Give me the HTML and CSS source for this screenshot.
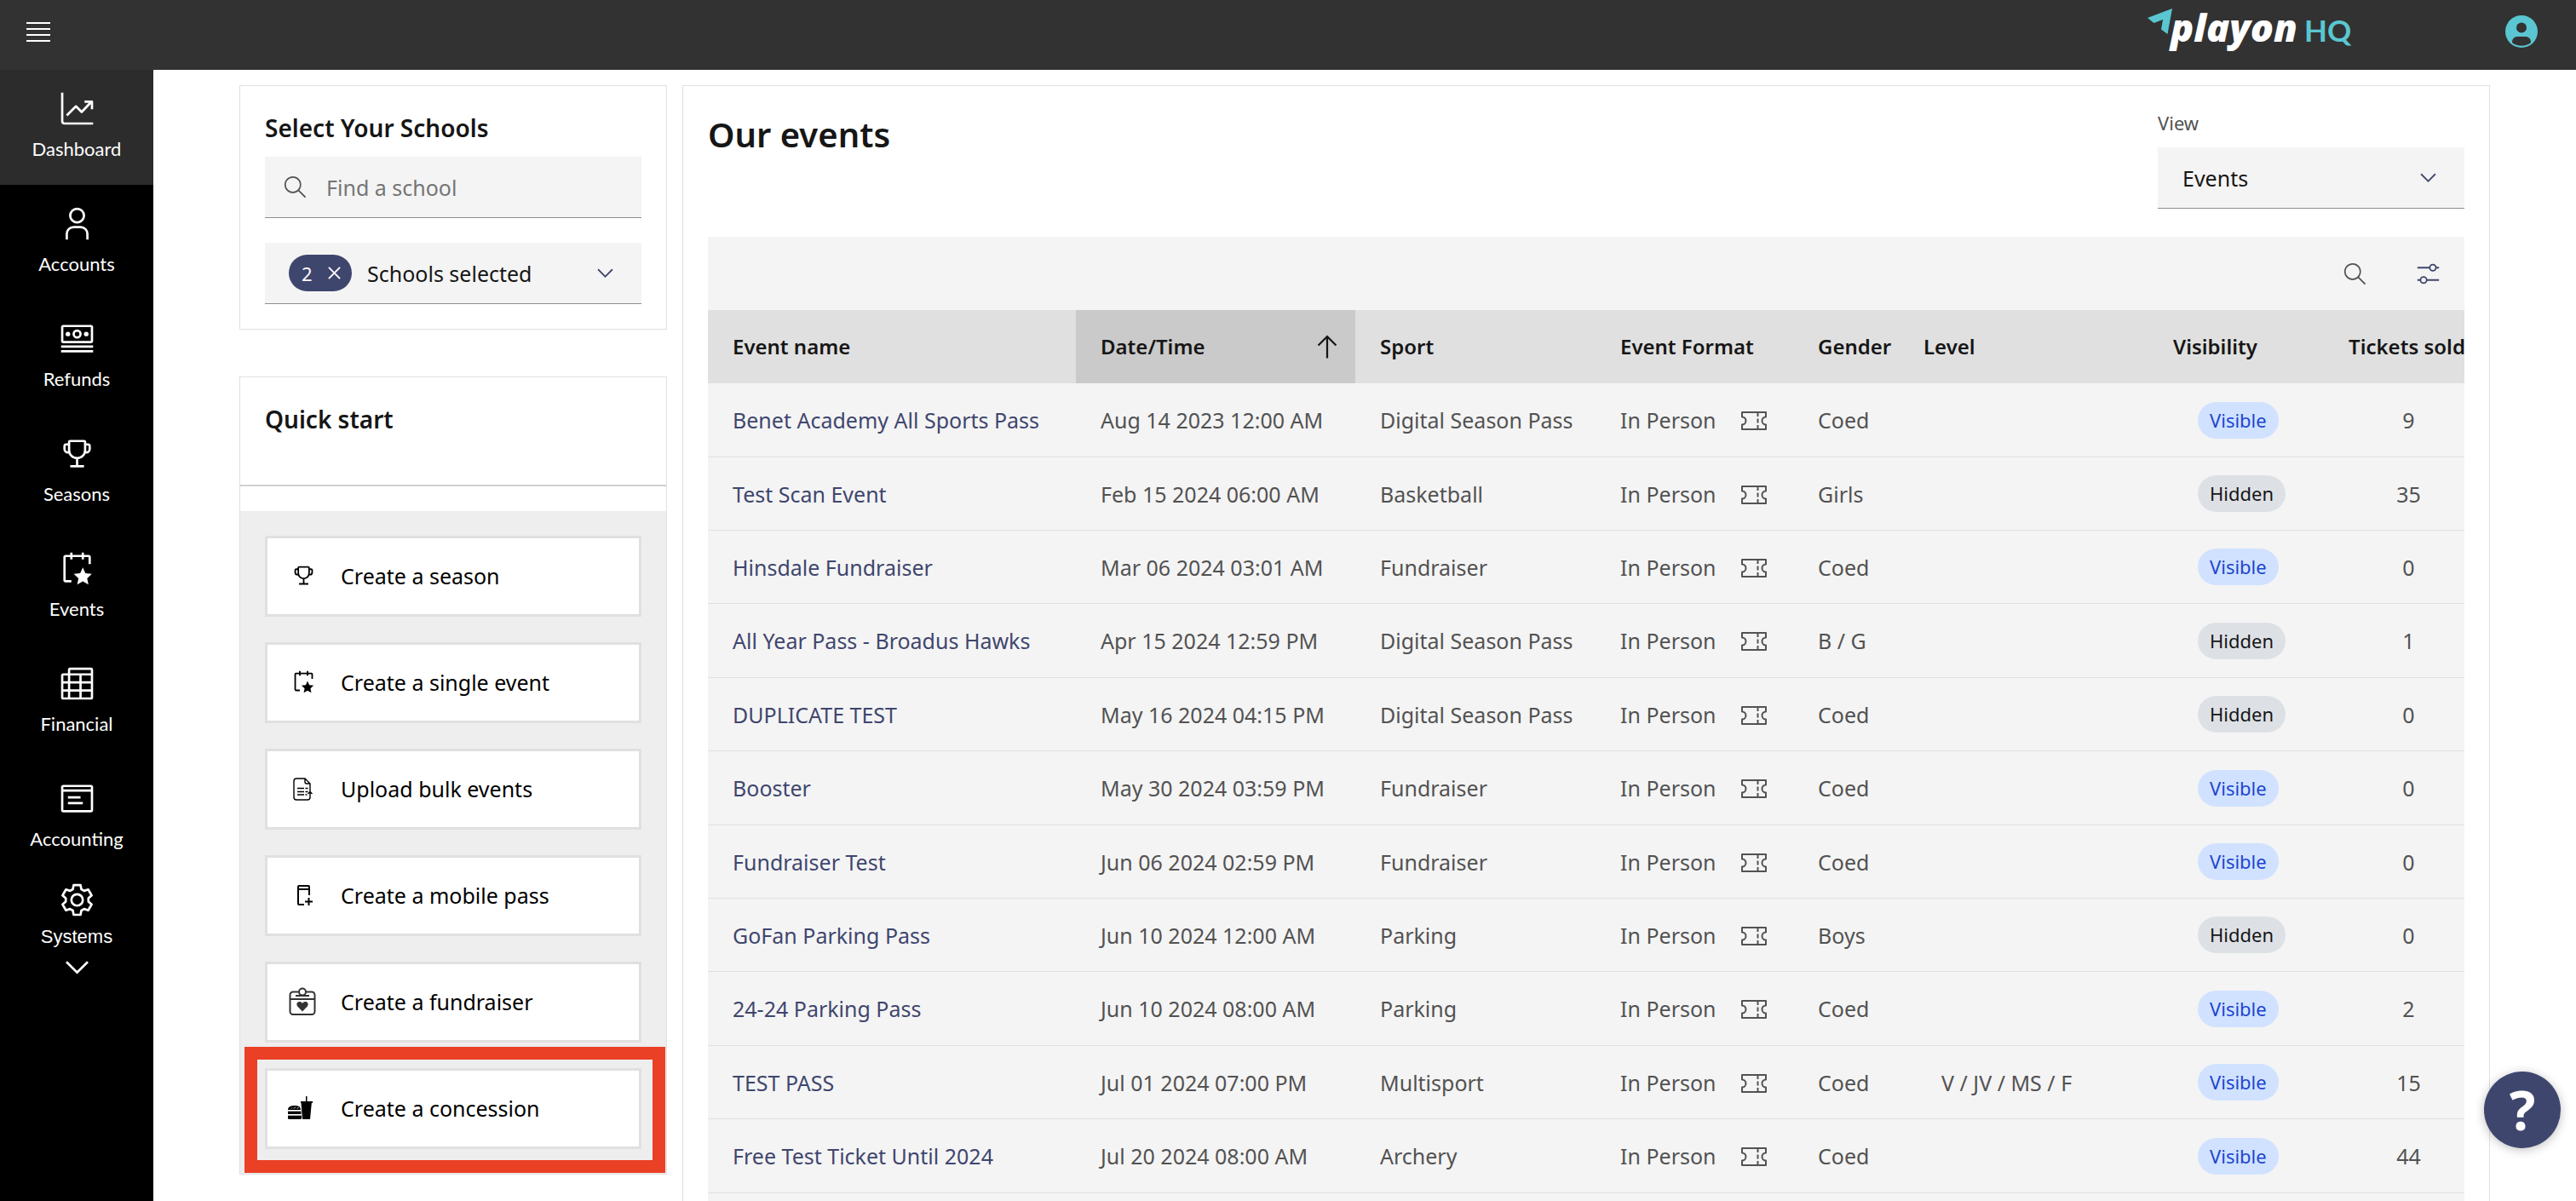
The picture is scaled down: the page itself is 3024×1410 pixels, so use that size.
FILE: index.html
```html
<!DOCTYPE html>
<html lang="en">
<head>
<meta charset="utf-8">
<title>PlayOn HQ – Dashboard</title>
<link rel="stylesheet" href="styles.css">
</head>
<body>
<svg class="sprite" aria-hidden="true">
  <symbol id="i-chart" viewBox="0 0 32 32"><path class="ln" d="M3 2v25a2 2 0 0 0 2 2h25M7 22l8-8 5 5L29 9.500M22.500 10H29v6.500"/></symbol>
  <symbol id="i-user" viewBox="0 0 32 32"><path class="ln" d="M7 30v-5a6 6 0 0 1 6-6h6a6 6 0 0 1 6 6v5"/><circle class="ln" cx="16" cy="9" r="6"/></symbol>
  <symbol id="i-money" viewBox="0 0 32 32"><path class="ln" d="M2 23h28M2 27h28"/><rect class="ln" x="3" y="5" width="26" height="14" rx="1"/><circle class="ln" cx="16" cy="12" r="3"/><circle class="fl" cx="8" cy="12" r="2"/><circle class="fl" cx="24" cy="12" r="2"/></symbol>
  <symbol id="i-trophy" viewBox="0 0 32 32"><path class="ln" d="M9 6a1 1 0 0 1 1-1h12a1 1 0 0 1 1 1v7a7 7 0 0 1-14 0zM16 20v7M10 27h12M9 8H6.500A1.500 1.500 0 0 0 5 9.500V12a3 3 0 0 0 3 3h1M23 8h2.500A1.500 1.500 0 0 1 27 9.500V12a3 3 0 0 1-3 3h-1"/></symbol>
  <symbol id="i-event" viewBox="0 0 32 32"><path class="ln" d="M11 27H6a1 1 0 0 1-1-1V6a1 1 0 0 1 1-1h20a1 1 0 0 1 1 1v6M11 2v6M21 2v6"/><path class="fl" d="M21 15l2.300 5 5.600.7-4.100 3.800 1.100 5.500-4.900-2.800-4.900 2.800 1.100-5.500-4.100-3.800 5.600-.7z"/></symbol>
  <symbol id="i-table" viewBox="0 0 32 32"><path class="ln" d="M9 29V4a1 1 0 0 1 1-1h18a1 1 0 0 1 1 1v24a1 1 0 0 1-1 1H4a1 1 0 0 1-1-1V9a1 1 0 0 1 1-1h25M3 15h26M3 22h26M19 8v21"/></symbol>
  <symbol id="i-ledger" viewBox="0 0 32 32"><rect class="ln" x="3" y="5" width="26" height="22" rx="1"/><path class="ln" d="M3 9h26M8 15h11M8 20h13"/></symbol>
  <symbol id="i-gear" viewBox="0 0 32 32"><circle class="ln" cx="16" cy="16" r="5"/><path class="ln" d="M19.700 6.700L22.200 8.100L25.700 6.900L28.700 12.100L25.900 14.600V17.400L28.700 19.900L25.700 25.100L22.200 23.900L19.700 25.300L19 29H13L12.300 25.300L9.800 23.900L6.300 25.100L3.300 19.900L6.100 17.400V14.600L3.300 12.100L6.300 6.900L9.800 8.100L12.300 6.700L13 3H19Z"/></symbol>
  <symbol id="i-chevron" viewBox="0 0 16 16"><path class="fl" d="M8 11L3 6l.7-.7L8 9.600l4.300-4.300.7.700z"/></symbol>
  <symbol id="i-search" viewBox="0 0 16 16"><path class="fl" d="M15 14.300L10.700 10c1.900-2.300 1.600-5.800-.7-7.700S4.200.7 2.300 3 .7 8.800 3 10.700c2 1.700 5 1.700 7 0l4.300 4.300.7-.7zM2 6.500C2 4 4 2 6.500 2S11 4 11 6.500 9 11 6.500 11 2 9 2 6.500z"/></symbol>
  <symbol id="i-sliders" viewBox="0 0 32 32"><path class="ln" d="M2 8h16M26 8h4M2 24h4M14 24h16"/><circle class="ln" cx="22" cy="8" r="4"/><circle class="ln" cx="10" cy="24" r="4"/></symbol>
  <symbol id="i-ticket" viewBox="0 0 32 24"><path class="ln" d="M2 2h28v5.500a4.500 4.500 0 0 0 0 9V22H2v-5.500a4.500 4.500 0 0 0 0-9zM20.500 2v5M20.500 9.500v5M20.500 17v5"/></symbol>
  <symbol id="i-up" viewBox="0 0 32 32"><path class="fl" d="M16 4L6 14l1.400 1.400L15 7.800V28h2V7.800l7.600 7.600L26 14z"/></symbol>
  <symbol id="i-upload" viewBox="0 0 36 36"><path class="th" d="M26 25v3a3 3 0 0 1-3 3H10a3 3 0 0 1-3-3V9a3 3 0 0 1 3-3h10l6 6v10M20 6v4a2 2 0 0 0 2 2h4M11 17.500h8M20.500 17.500h3M11 21.500h8M20.500 21.500h3M11 25h8M20.500 25h2M26 29v-7.500M23.500 24l2.500-2.500 2.500 2.500"/></symbol>
  <symbol id="i-mobile" viewBox="0 0 36 36"><path class="ln" d="M19 29h-6a1 1 0 0 1-1-1V8a1 1 0 0 1 1-1h11a1 1 0 0 1 1 1v10M12 11h13M24.500 21v9M20 25.500h9"/></symbol>
  <symbol id="i-fund" viewBox="0 0 36 36"><path class="ln gr" d="M12.500 6.500H6A3.500 3.500 0 0 0 2.500 10v19.500A3.500 3.500 0 0 0 6 33h22a3.500 3.500 0 0 0 3.500-3.500V10A3.500 3.500 0 0 0 28 6.500h-6.500M2.500 15h29M9 11h16"/><circle class="ln gr" cx="17" cy="6.500" r="4"/><path class="gf" d="M17 29.500l-6-6.200a3.600 3.600 0 0 1 0-4.300c1.600-1.600 4.500-1.300 6 1 1.500-2.300 4.400-2.600 6-1a3.600 3.600 0 0 1 0 4.300z"/></symbol>
  <symbol id="i-food" viewBox="0 0 36 36"><path class="fl" d="M21 4h1.500v6H29v2h-1.200L26 31H17l-1.500-19H15v-2h6zM0 20c0-4 4-5 8-5s7 1 7 5zM0 21.500h15.500v3.500H0zM0 26.500h16v3a1.500 1.500 0 0 1-1.500 1.500h-13A1.500 1.500 0 0 1 0 29.500z"/><path class="wh" d="M4 18.500l1-1M7 18.500l2-2M11 18.500l1.500-1.500M0 20.800h15.500M0 25.800h16"/></symbol>
</svg>

<div class="app">
  <header class="topbar">
    <button class="icon-btn" type="button" aria-label="Menu"><svg width="30" height="24" viewBox="0 0 30 24"><path d="M1 2h28M1 9h28M1 16h28M1 23h28" stroke="#fff" stroke-width="2"/></svg></button>
    <a class="logo" href="#" aria-label="PlayOn HQ"><svg width="240" height="72" viewBox="0 -9 240 72"><path fill="#5ac6d1" d="M0 11L29 0l-5.500 30-7.500-5.500L18 13 7.500 17z"/><text class="logo-name" x="27" y="39">playon</text><text class="logo-hq" x="184" y="39">HQ</text></svg></a>
    <button class="icon-btn" type="button" aria-label="Profile"><svg width="38" height="38" viewBox="0 0 38 38"><circle cx="19" cy="19" r="19" fill="#5ac6d1"/><circle cx="19" cy="14.500" r="6" fill="#323232"/><path fill="#323232" d="M8 32c0-5 3-7 6-7h10c3 0 6 2 6 7-6 5-16 5-22 0z"/></svg></button>
  </header>

  <nav class="side" aria-label="Main">
    <a class="side-item active" href="#"><svg><use href="#i-chart"/></svg>Dashboard</a>
    <a class="side-item" href="#"><svg><use href="#i-user"/></svg>Accounts</a>
    <a class="side-item" href="#"><svg><use href="#i-money"/></svg>Refunds</a>
    <a class="side-item" href="#"><svg><use href="#i-trophy"/></svg>Seasons</a>
    <a class="side-item" href="#"><svg><use href="#i-event"/></svg>Events</a>
    <a class="side-item" href="#"><svg><use href="#i-table"/></svg>Financial</a>
    <a class="side-item" href="#"><svg><use href="#i-ledger"/></svg>Accounting</a>
    <button class="side-more" type="button"><svg><use href="#i-gear"/></svg><span>Systems</span><svg><use href="#i-chevron"/></svg></button>
  </nav>

  <main class="content">
    <div class="left">
      <section class="panel schools">
        <h2>Select Your Schools</h2>
        <label class="field search"><svg><use href="#i-search"/></svg><input type="text" placeholder="Find a school" aria-label="Find a school"></label>
        <div class="field multi">
          <button class="chip" type="button" aria-label="Clear 2 selected">2<svg viewBox="0 0 16 16"><path d="M1 1l14 14M15 1L1 15" stroke="#fff" stroke-width="2"/></svg></button>
          <button class="multi-toggle" type="button">Schools selected<svg><use href="#i-chevron"/></svg></button>
        </div>
      </section>

      <section class="panel quick">
        <div class="quick-head"><h2>Quick start</h2></div>
        <div class="quick-body">
          <button type="button"><span><svg class="sm"><use href="#i-trophy"/></svg></span>Create a season</button>
          <button type="button"><span><svg class="sm"><use href="#i-event"/></svg></span>Create a single event</button>
          <button type="button"><span><svg><use href="#i-upload"/></svg></span>Upload bulk events</button>
          <button type="button"><span><svg><use href="#i-mobile"/></svg></span>Create a mobile pass</button>
          <button type="button"><span><svg><use href="#i-fund"/></svg></span>Create a fundraiser</button>
          <button type="button"><span><svg><use href="#i-food"/></svg></span>Create a concession</button>
        </div>
        <div class="highlight"></div>
      </section>
    </div>

    <section class="panel events">
      <div class="events-head">
        <h1>Our events</h1>
        <div class="view">
          <label for="view">View</label>
          <div class="field"><select id="view"><option>Events</option></select><svg><use href="#i-chevron"/></svg></div>
        </div>
      </div>
      <div class="toolbar">
        <button type="button" aria-label="Search"><svg class="grey"><use href="#i-search"/></svg></button>
        <button type="button" aria-label="Filter"><svg><use href="#i-sliders"/></svg></button>
      </div>
      <div class="table-wrap">
        <table>
          <colgroup><col class="c-name"><col class="c-date"><col class="c-sport"><col class="c-format"><col class="c-gender"><col class="c-level"><col class="c-vis"><col class="c-sold"></colgroup>
          <thead>
            <tr><th>Event name</th><th class="sorted" aria-sort="ascending"><button type="button">Date/Time<svg><use href="#i-up"/></svg></button></th><th>Sport</th><th>Event Format</th><th>Gender</th><th>Level</th><th>Visibility</th><th>Tickets sold</th></tr>
          </thead>
          <tbody>
            <tr><td><a href="#">Benet Academy All Sports Pass</a></td><td>Aug 14 2023 12:00 AM</td><td>Digital Season Pass</td><td>In Person<svg><use href="#i-ticket"/></svg></td><td>Coed</td><td></td><td><span class="tag on">Visible</span></td><td>9</td></tr>
            <tr><td><a href="#">Test Scan Event</a></td><td>Feb 15 2024 06:00 AM</td><td>Basketball</td><td>In Person<svg><use href="#i-ticket"/></svg></td><td>Girls</td><td></td><td><span class="tag">Hidden</span></td><td>35</td></tr>
            <tr><td><a href="#">Hinsdale Fundraiser</a></td><td>Mar 06 2024 03:01 AM</td><td>Fundraiser</td><td>In Person<svg><use href="#i-ticket"/></svg></td><td>Coed</td><td></td><td><span class="tag on">Visible</span></td><td>0</td></tr>
            <tr><td><a href="#">All Year Pass - Broadus Hawks</a></td><td>Apr 15 2024 12:59 PM</td><td>Digital Season Pass</td><td>In Person<svg><use href="#i-ticket"/></svg></td><td>B / G</td><td></td><td><span class="tag">Hidden</span></td><td>1</td></tr>
            <tr><td><a href="#">DUPLICATE TEST</a></td><td>May 16 2024 04:15 PM</td><td>Digital Season Pass</td><td>In Person<svg><use href="#i-ticket"/></svg></td><td>Coed</td><td></td><td><span class="tag">Hidden</span></td><td>0</td></tr>
            <tr><td><a href="#">Booster</a></td><td>May 30 2024 03:59 PM</td><td>Fundraiser</td><td>In Person<svg><use href="#i-ticket"/></svg></td><td>Coed</td><td></td><td><span class="tag on">Visible</span></td><td>0</td></tr>
            <tr><td><a href="#">Fundraiser Test</a></td><td>Jun 06 2024 02:59 PM</td><td>Fundraiser</td><td>In Person<svg><use href="#i-ticket"/></svg></td><td>Coed</td><td></td><td><span class="tag on">Visible</span></td><td>0</td></tr>
            <tr><td><a href="#">GoFan Parking Pass</a></td><td>Jun 10 2024 12:00 AM</td><td>Parking</td><td>In Person<svg><use href="#i-ticket"/></svg></td><td>Boys</td><td></td><td><span class="tag">Hidden</span></td><td>0</td></tr>
            <tr><td><a href="#">24-24 Parking Pass</a></td><td>Jun 10 2024 08:00 AM</td><td>Parking</td><td>In Person<svg><use href="#i-ticket"/></svg></td><td>Coed</td><td></td><td><span class="tag on">Visible</span></td><td>2</td></tr>
            <tr><td><a href="#">TEST PASS</a></td><td>Jul 01 2024 07:00 PM</td><td>Multisport</td><td>In Person<svg><use href="#i-ticket"/></svg></td><td>Coed</td><td>V / JV / MS / F</td><td><span class="tag on">Visible</span></td><td>15</td></tr>
            <tr><td><a href="#">Free Test Ticket Until 2024</a></td><td>Jul 20 2024 08:00 AM</td><td>Archery</td><td>In Person<svg><use href="#i-ticket"/></svg></td><td>Coed</td><td></td><td><span class="tag on">Visible</span></td><td>44</td></tr>
          </tbody>
        </table>
      </div>
    </section>
  </main>
</div>
<button class="help" type="button" aria-label="Help">?</button>
</body>
</html>
```
FILE: styles.css
```css
* { box-sizing: border-box; }

body {
  margin: 0;
  font: 25px/32px "Noto Sans", "Open Sans", sans-serif;
  color: #161616;
  background: #fff;
}

button, input, select { font: inherit; color: inherit; border: 0; border-radius: 0; background: none; padding: 0; margin: 0; }
a { color: inherit; text-decoration: none; }
h1, h2 { margin: 0; font-weight: 600; }
h1 { font-size: 40px; line-height: 56px; }
h2 { font-size: 28px; line-height: 40px; }
svg { display: block; flex: none; }

.sprite { position: absolute; width: 0; height: 0; }
.ln { fill: none; stroke: currentColor; stroke-width: 2; stroke-linejoin: round; }
.th { fill: none; stroke: currentColor; stroke-width: 1.4; }
.fl { fill: currentColor; }
.gr { stroke: #333; }
.gf { fill: #333; }
.wh { fill: none; stroke: #fff; stroke-width: 1; }

.app {
  display: grid;
  grid-template: 82px 1fr / 180px 1fr;
  height: 100vh;
  overflow: hidden;
}

/* top bar */
.topbar {
  grid-column: 1 / -1;
  display: flex;
  align-items: center;
  gap: 180px;
  padding: 0 45px 9px 30px;
  background: #323232;
}
.logo { margin-left: auto; }
.logo svg { overflow: visible; }
.logo-name { font: italic 800 45px "Open Sans", sans-serif; fill: #fff; }
.logo-hq { font: bold 35px Lato, sans-serif; fill: #5ac6d1; }

/* side navigation */
.side {
  background: #000;
  color: #fff;
  font: 22px/28px Lato, sans-serif;
}
.side svg { width: 43px; height: 43px; }
.side-item {
  display: flex;
  flex-direction: column;
  align-items: center;
  gap: 12px;
  height: 135px;
  padding-top: 24px;
}
.side-item.active { background: #2c2c2c; }
.side-more {
  display: flex;
  flex-direction: column;
  align-items: center;
  width: 100%;
  padding-top: 8px;
  font: 22px/28px "Liberation Sans", sans-serif;
}
.side-more span { padding-top: 8px; }

/* page content */
.content {
  display: grid;
  grid-template-columns: 502px minmax(0, 1fr);
  gap: 18px;
  align-items: start;
  padding: 18px 101px 0;
}
.panel { border: 1px solid #e0e0e0; }
.left { display: grid; grid-template-columns: minmax(0, 1fr); gap: 55px; }

.field {
  display: flex;
  align-items: center;
  height: 72px;
  background: #f4f4f4;
  border-bottom: 1px solid #8d8d8d;
}
.field svg, .multi-toggle svg { width: 29px; height: 29px; color: #3f466e; }

.schools { padding: 29px; }
.schools h2 { margin-bottom: 14px; }
.search { gap: 22px; padding: 0 21px; margin-bottom: 29px; }
.search svg { color: #525252; }
.search input { flex: 1; min-width: 0; outline: 0; }
.search input::placeholder { color: #757575; opacity: 1; }
.multi { gap: 18px; padding: 0 28px; }
.chip {
  display: flex;
  align-items: center;
  justify-content: space-between;
  width: 74px;
  height: 43px;
  padding: 0 13px 0 15px;
  border-radius: 22px;
  background: #3f466e;
  color: #fff;
  font-size: 22px;
}
.chip svg { width: 15px; height: 15px; }
.multi-toggle { flex: 1; display: flex; align-items: center; justify-content: space-between; }

.quick { position: relative; }
.quick-head { height: 128px; padding: 29px; border-bottom: 2px solid #d1d1d1; }
.quick-body {
  display: grid;
  gap: 30px;
  margin-top: 29px;
  padding: 29px;
  background: #eee;
}
.quick-body button {
  display: flex;
  align-items: center;
  gap: 26px;
  height: 95px;
  padding: 0 0 2px 24px;
  border: 3px solid #e0e0e0;
  background: #fff;
  color: #000;
}
.quick-body span { display: grid; place-items: center; width: 36px; height: 36px; }
.quick-body svg { width: 36px; height: 36px; }
.quick-body .sm { width: 29px; height: 29px; }
.highlight {
  position: absolute;
  left: 5px;
  right: 1px;
  bottom: 1px;
  height: 148px;
  border: 15px solid #ea4026;
}

/* events panel */
.events { padding: 29px; }
.events-head { display: flex; justify-content: space-between; margin-bottom: 33px; }
.view { width: 360px; }
.view label { display: block; margin-bottom: 14px; font-size: 22px; line-height: 29px; color: #525252; }
.view .field { position: relative; }
.view select { width: 100%; height: 100%; padding: 0 29px; appearance: none; }
.view svg { position: absolute; right: 28px; pointer-events: none; }

.toolbar { display: flex; justify-content: flex-end; height: 86px; background: #f4f4f4; color: #3f466e; }
.toolbar button { display: grid; place-items: center; width: 86px; }
.toolbar svg { width: 29px; height: 29px; }
.toolbar .grey { color: #525252; }

.table-wrap { overflow: hidden; padding-bottom: 86px; background: #f4f4f4; }
table { width: 2096px; table-layout: fixed; border-collapse: separate; border-spacing: 0; }
.c-name { width: 432px; }
.c-date { width: 328px; }
.c-sport { width: 282px; }
.c-format { width: 232px; }
.c-gender { width: 124px; }
.c-level { width: 293px; }
.c-vis { width: 206px; }
.c-sold { width: 199px; }

th, td { padding: 0 0 0 29px; text-align: left; white-space: nowrap; }
th { height: 86px; font-size: 24px; font-weight: 600; background: #e0e0e0; }
th.sorted { background: #cacaca; }
th button { display: flex; align-items: center; justify-content: space-between; width: 100%; padding-right: 15px; font-weight: 600; }
th svg { width: 36px; height: 36px; }

td { height: 86px; color: #525252; border-bottom: 1px solid #e0e0e0; }
tr:nth-child(5n + 1) td, tr:nth-child(5n + 4) td { height: 87px; }
td a { color: #3f466e; }
td svg { display: inline-block; width: 32px; height: 24px; margin-left: 28px; vertical-align: -3px; }
td:nth-child(6) { padding-left: 50px; }
td:nth-child(7) { padding-left: 58px; }
td:nth-child(8) { padding-left: 0; text-align: center; }

.tag {
  display: inline-block;
  padding: 0 14px;
  border-radius: 22px;
  background: #dde1e6;
  color: #161616;
  font-size: 22px;
  line-height: 43px;
  vertical-align: middle;
}
.tag.on { background: #d0e2ff; color: #1d45cf; }

.help {
  position: fixed;
  right: 18px;
  bottom: 62px;
  width: 90px;
  height: 90px;
  border-radius: 50%;
  background: #3f466e;
  color: #fff;
  font-size: 64px;
  font-weight: 700;
  line-height: 90px;
  box-shadow: 0 2px 12px rgba(0, 0, 0, .25);
}
```
